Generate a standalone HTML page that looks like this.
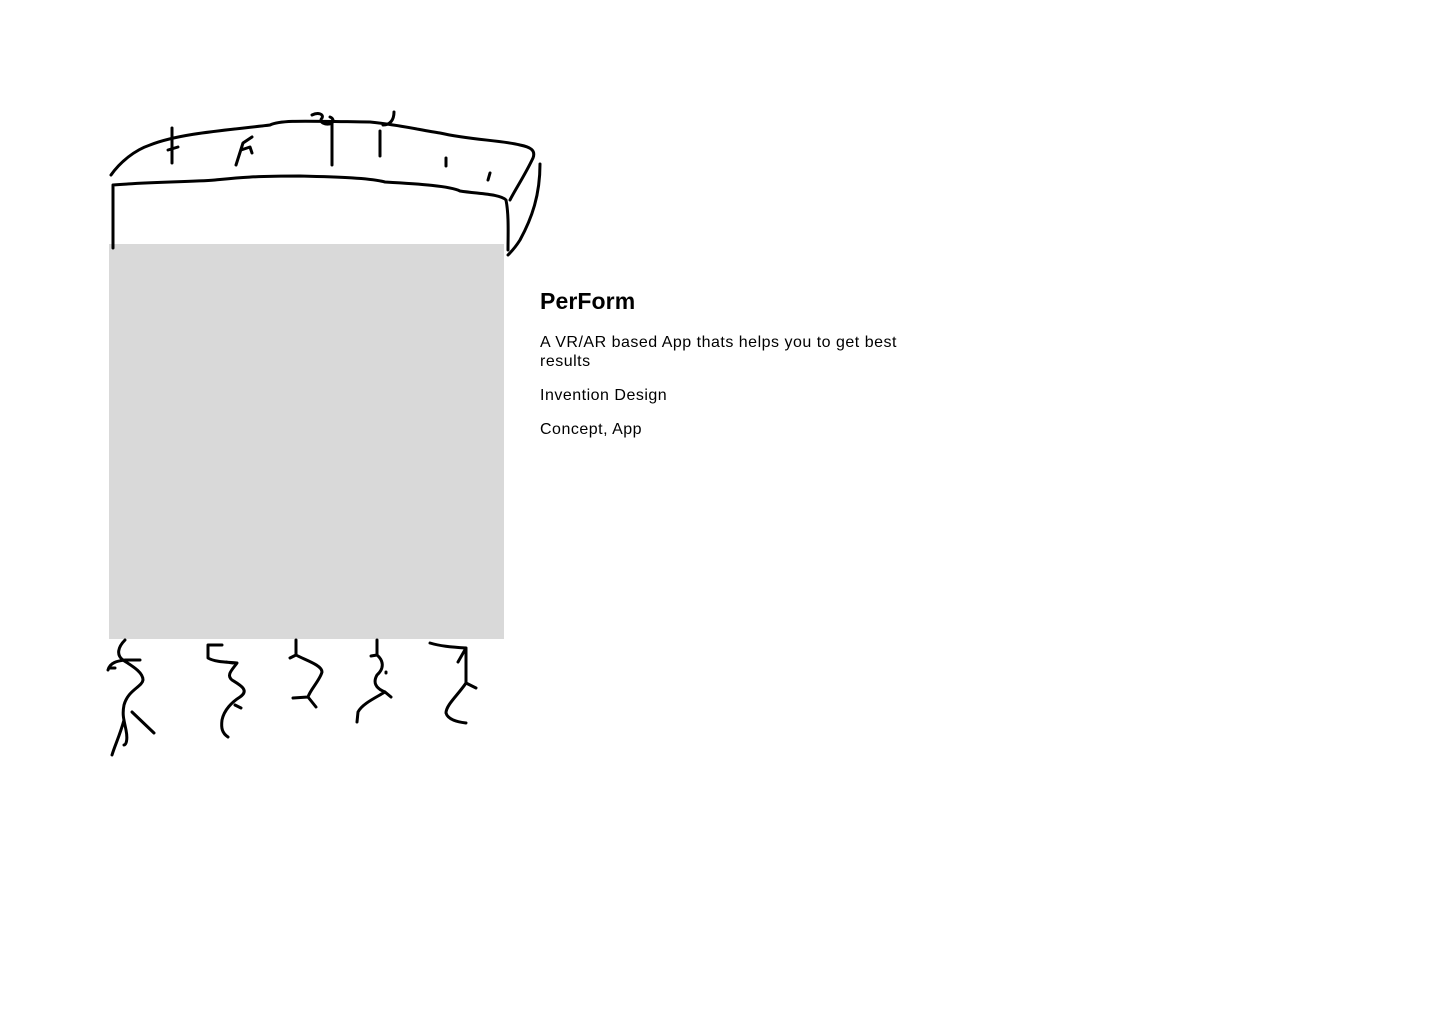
<!DOCTYPE html>
<html><head><meta charset="utf-8"><style>
html,body{margin:0;padding:0;background:#fff;width:1440px;height:1024px;overflow:hidden;font-family:"Liberation Sans",sans-serif;color:#000}
.box{position:absolute;left:109px;top:244px;width:395px;height:395px;background:#d9d9d9}
h1{position:absolute;left:540px;top:288px;margin:0;font-size:23px;font-weight:bold;letter-spacing:0.1px}
p{position:absolute;left:540px;margin:0;font-size:16px;line-height:19px;width:380px;letter-spacing:0.5px}
svg{position:absolute;left:0;top:0}
</style></head><body>
<div class="box"></div>
<svg width="1440" height="1024" fill="none" stroke="#000" stroke-width="3" stroke-linecap="round" stroke-linejoin="round">
<path d="M111 175 C120 162 135 150 150 145 C180 133 230 130 270 125 C280 120 300 121 370 122 C400 125 420 130 440 133 C470 140 500 140 520 145 C530 147 536 150 533 158 C525 175 515 190 510 200"/>
<path d="M113 248 L113 185 C150 182 190 182 215 180 C235 178 250 176 300 176 C340 177 370 178 385 182 C420 184 450 186 460 191 C480 194 500 194 506 200 C509 215 508 235 508 250"/>
<path d="M540 164 C540 195 532 218 520 240 C515 248 511 252 508 255"/>
<path d="M172 128 L172 163 M168 150 L178 147"/>
<path d="M236 165 L243 143 L252 137 M241 150 L250 147 L252 153"/>
<path d="M332 122 L332 165 M312 115 C318 112 324 114 322 118 C318 122 326 126 332 123 C334 121 333 118 330 117"/>
<path d="M380 131 L380 156"/>
<path d="M394 112 C394 120 390 125 383 125"/>
<path d="M446 158 L446 166 M490 173 L488 180"/>
<path d="M125 640 C118 647 116 655 123 660 C132 666 143 672 143 680 C142 687 128 690 124 705 C122 715 124 720 126 730 C128 740 126 745 124 745 M124 720 C120 735 115 745 112 755 M108 670 C110 662 118 661 125 660 L140 660 M109 668 L115 668 M132 712 L154 733"/>
<path d="M222 645 L208 645 L208 658 C215 662 225 662 237 663 C232 670 226 675 232 680 C240 685 250 690 240 697 C232 702 224 710 222 720 C221 728 222 733 228 737 M226 662 L233 663 M235 705 L241 708"/>
<path d="M296 640 L296 655 L290 658 M296 655 C305 660 322 665 322 672 C320 680 310 690 308 697 L293 698 M308 697 L316 707"/>
<path d="M377 640 L377 655 L371 656 M377 655 C383 660 385 668 377 675 C373 682 375 688 385 692 L391 697 M385 692 C375 698 362 704 358 712 L357 722 M386 672 L386 673"/>
<path d="M430 643 C440 646 450 647 466 648 L466 683 L476 688 M466 648 L458 662 M466 683 C458 695 446 705 446 713 C448 720 458 722 466 723"/>
</svg>
<h1>PerForm</h1>
<p style="top:333px">A VR/AR based App thats helps you to get best results</p>
<p style="top:386px">Invention Design</p>
<p style="top:420px">Concept, App</p>
</body></html>
